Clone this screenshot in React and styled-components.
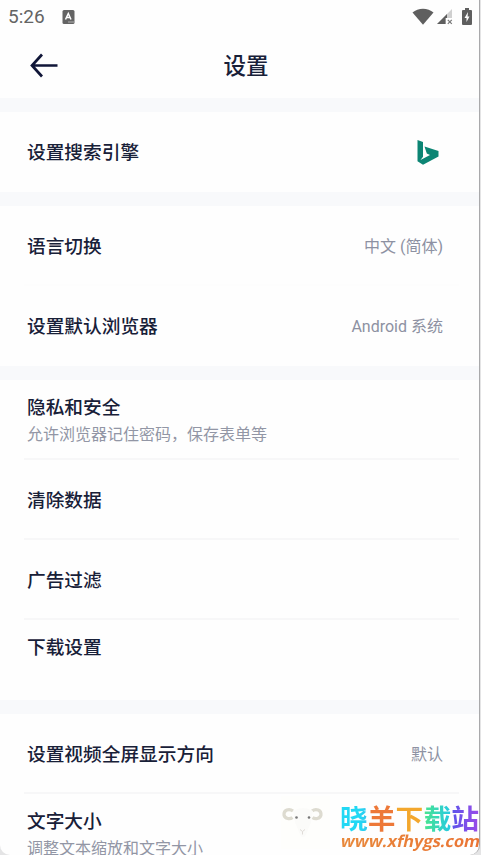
import React from 'react'
import styled, { createGlobalStyle } from 'styled-components'

const GlobalStyle = createGlobalStyle`
  * {
    box-sizing: border-box;
  }

  body {
    margin: 0;
    overflow: hidden;
    background: #e4e4e5;
    font-family: Roboto, 'Noto Sans CJK SC', sans-serif;
  }
`

const Screen = styled.div`
  position: relative;
  width: 480px;
  height: 855px;
  overflow: hidden;
  background: #fefefe;
  border-right: 1px solid #a9a9ab;
  border-radius: 0 0 10px 10px;
`

const StatusBar = styled.div`
  display: flex;
  align-items: center;
  height: 33px;
  padding: 0 7px 0 8px;
  color: #646464;
`

const Clock = styled.span`
  font-size: 19px;
  margin-right: 17px;
`

const StatusIcons = styled.div`
  display: flex;
  align-items: center;
  margin-left: auto;
`

const Header = styled.header`
  display: grid;
  grid-template-columns: 58px 1fr 58px;
  align-items: center;
  height: 65px;
`

const BackButton = styled.button`
  display: flex;
  padding: 0 0 0 30px;
  border: 0;
  background: none;
  color: #101638;
`

const Title = styled.h1`
  margin: 2px 0 0 13px;
  color: #182038;
  font-size: 22.5px;
  font-weight: 500;
  line-height: 33px;
  text-align: center;
`

const Group = styled.section`
  border-top: 14px solid #f8f9fb;
`

const Row = styled.div`
  position: relative;
  display: flex;
  align-items: center;
  justify-content: space-between;
  height: 80px;
  padding: ${({ $stacked }) => ($stacked ? 1 : 2)}px 36px 0 27px;
  padding-bottom: ${({ $lift }) => $lift || 0}px;

  &:not(:first-child)::before {
    content: '';
    position: absolute;
    top: -2px;
    left: 24px;
    right: 20px;
    height: 2px;
    background: ${({ $faint }) => ($faint ? '#fdfdfd' : '#f7f7f8')};
  }
`

const Label = styled.div`
  color: #182038;
  font-size: 18.7px;
  font-weight: 500;
  line-height: 28px;
`

const Hint = styled.div`
  color: #9296a5;
  font-size: 16px;
  line-height: 25px;
`

const Value = styled.span`
  color: #8d91a2;
  font-size: 16px;
  line-height: 24px;
`

const BingLogo = styled.svg`
  margin: 0 4px 2px 0;
`

const Watermark = styled.div`
  position: absolute;
  left: 281px;
  top: 796px;
  display: flex;
  width: 198px;
  height: 59px;
`

const Brand = styled.div`
  flex: none;
  width: 139px;
  margin-left: 10px;
  white-space: nowrap;
`

const BrandName = styled.div`
  background: linear-gradient(
    90deg,
    #22d8f4 0 14%,
    #35c6ee 20%,
    #ed7838 20% 40%,
    #f3a72d 40% 58%,
    #f0c640 60%,
    #4be58a 60%,
    #23c9e6 80%,
    #5b55ea 80%,
    #9a4be8 100%
  );
  background-clip: text;
  color: transparent;
  font-size: 27.8px;
  font-weight: 700;
  line-height: 30px;
  margin-top: 9px;
`

const BrandUrl = styled.div`
  width: max-content;
  margin: -6px 0 0 1px;
  background: linear-gradient(90deg, #e8893c, #ea7434);
  background-clip: text;
  color: transparent;
  font-family: 'Open Sans', sans-serif;
  font-size: 16.4px;
  font-weight: 700;
  line-height: 24px;
  transform: skewX(-12deg);
`

const InputIcon = () => (
  <svg width="13" height="14" viewBox="0 0 13 14">
    <rect x="0.5" y="0" width="12" height="14" rx="1.5" fill="#646464" />
    <path d="M3.5 9.5 6.3 3.5 9 9.5M4.5 7.5h3.6" fill="none" stroke="#fff" strokeWidth="1.5" />
    <path d="M6.5 12h1M8.5 12h1M10.5 12h1" stroke="#fff" />
  </svg>
)

const WifiIcon = () => (
  <svg width="22" height="17" viewBox="0 0 22 17">
    <path d="M0.5 4.6C6-0.6 16-0.6 21.5 4.6L11 16.8Z" fill="#5f5f5f" />
  </svg>
)

const SignalIcon = () => (
  <svg width="16" height="16" viewBox="0 0 16 16" style={{ marginLeft: 3 }}>
    <path d="M15 0v9H9v6H0Z" fill="#d0d0d0" />
    <path d="M10 5v4H8.5v6H0Z" fill="#5f5f5f" />
    <path d="m10.8 10.8 4 4M14.8 10.8l-4 4" stroke="#777" strokeWidth="1.2" />
  </svg>
)

const BatteryIcon = () => (
  <svg width="10" height="18" viewBox="0 0 10 18" style={{ marginLeft: 9 }}>
    <path d="M3 0h4v2h2q1 0 1 1v13q0 1-1 1H1q-1 0-1-1V3q0-1 1-1h2Z" fill="#5f5f5f" />
    <path d="M6 4 2.5 10h2v4L7.5 8.5H5.6Z" fill="#fff" />
  </svg>
)

const SheepIcon = () => (
  <svg width="49" height="59" viewBox="0 0 49 59" style={{ flex: 'none' }}>
    <rect width="49" height="53" fill="#fefefc" />
    <path
      d="M12 15C8 12 2.5 14 3 19c1 4 6 4.5 8.5 2.5M31 15c4-3 9.5-1 9 4-1 4-6 4.5-8.5 2.5"
      fill="none"
      stroke="#dddbd0"
      strokeWidth="3.2"
    />
    <path d="M12 15q10-6 20 0l-2 11-5 13q-3 4-6 0l-5-13Z" fill="#fbfbf9" />
    <circle cx="15.5" cy="21.5" r="1.3" fill="#777" />
    <circle cx="28" cy="21.5" r="1.3" fill="#777" />
    <path d="m19 33.5 2.5 2 2.5-2m-2.5 2v3" fill="none" stroke="#dfdbd7" />
  </svg>
)

const App = () => {
  return (
    <>
      <GlobalStyle />
      <Screen>
        <StatusBar>
          <Clock>5:26</Clock>
          <InputIcon />
          <StatusIcons>
            <WifiIcon />
            <SignalIcon />
            <BatteryIcon />
          </StatusIcons>
        </StatusBar>

        <Header>
          <BackButton aria-label="返回">
            <svg width="28" height="26" viewBox="0 0 28 26">
              <path d="M27.5 12.5H2.5M12 1.5 2 12.5l10 11" fill="none" stroke="currentColor" strokeWidth="2.7" />
            </svg>
          </BackButton>
          <Title>设置</Title>
        </Header>

        <Group>
          <Row>
            <Label>设置搜索引擎</Label>
            <BingLogo width="22" height="25" viewBox="0 0 22 25">
              <path
                d="M0.5 0 6 2v14.8L3.5 20 13 15 9.8 13.5 7.5 6.5 21.5 11v5.5L6 24.8l-5.5-3.5Z"
                fill="#0c8574"
              />
            </BingLogo>
          </Row>
        </Group>

        <Group>
          <Row>
            <Label>语言切换</Label>
            <Value>中文 (简体)</Value>
          </Row>
          <Row $faint>
            <Label>设置默认浏览器</Label>
            <Value>Android 系统</Value>
          </Row>
        </Group>

        <Group>
          <Row $stacked>
            <div>
              <Label>隐私和安全</Label>
              <Hint>允许浏览器记住密码，保存表单等</Hint>
            </div>
          </Row>
          <Row>
            <Label>清除数据</Label>
          </Row>
          <Row>
            <Label>广告过滤</Label>
          </Row>
          <Row $lift={26}>
            <Label>下载设置</Label>
          </Row>
        </Group>

        <Group>
          <Row>
            <Label>设置视频全屏显示方向</Label>
            <Value>默认</Value>
          </Row>
          <Row $stacked>
            <div>
              <Label>文字大小</Label>
              <Hint>调整文本缩放和文字大小</Hint>
            </div>
          </Row>
        </Group>

        <Watermark>
          <SheepIcon />
          <Brand>
            <BrandName>晓羊下载站</BrandName>
            <BrandUrl>www.xfhygs.com</BrandUrl>
          </Brand>
        </Watermark>
      </Screen>
    </>
  )
}

export default App
